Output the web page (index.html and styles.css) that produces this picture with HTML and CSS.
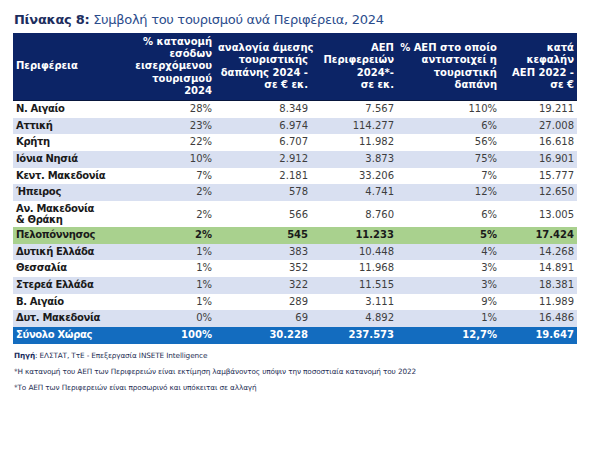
FILE: index.html
```html
<!DOCTYPE html>
<html lang="el">
<head>
<meta charset="utf-8">
<link rel="stylesheet" href="styles.css">
</head>
<body>
<div class="page">
  <h1 class="title"><b>Πίνακας 8:</b> Συμβολή του τουρισμού ανά Περιφέρεια, 2024</h1>
  <table class="tbl">
    <colgroup>
      <col class="c1"><col class="c2"><col class="c3"><col class="c4"><col class="c5"><col class="c6">
    </colgroup>
    <thead>
      <tr>
        <th class="lft">Περιφέρεια</th>
        <th>% κατανομή<br>εσόδων<br>εισερχόμενου<br>τουρισμού<br>2024</th>
        <th>αναλογία άμεσης<br>τουριστικής<br>δαπάνης 2024 -<br>σε € εκ.</th>
        <th>ΑΕΠ<br>Περιφερειών<br>2024*-<br>σε εκ.</th>
        <th>% ΑΕΠ στο οποίο<br>αντιστοιχεί η<br>τουριστική<br>δαπάνη</th>
        <th>κατά<br>κεφαλήν<br>ΑΕΠ 2022 -<br>σε €</th>
      </tr>
    </thead>
    <tbody>
      <tr><td>Ν. Αιγαίο</td><td>28%</td><td>8.349</td><td>7.567</td><td>110%</td><td>19.211</td></tr>
      <tr class="alt"><td>Αττική</td><td>23%</td><td>6.974</td><td>114.277</td><td>6%</td><td>27.008</td></tr>
      <tr><td>Κρήτη</td><td>22%</td><td>6.707</td><td>11.982</td><td>56%</td><td>16.618</td></tr>
      <tr class="alt"><td>Ιόνια Νησιά</td><td>10%</td><td>2.912</td><td>3.873</td><td>75%</td><td>16.901</td></tr>
      <tr><td>Κεντ. Μακεδονία</td><td>7%</td><td>2.181</td><td>33.206</td><td>7%</td><td>15.777</td></tr>
      <tr class="alt"><td>Ήπειρος</td><td>2%</td><td>578</td><td>4.741</td><td>12%</td><td>12.650</td></tr>
      <tr class="dbl"><td>Αν. Μακεδονία<br>&amp; Θράκη</td><td>2%</td><td>566</td><td>8.760</td><td>6%</td><td>13.005</td></tr>
      <tr class="hl"><td>Πελοπόννησος</td><td>2%</td><td>545</td><td>11.233</td><td>5%</td><td>17.424</td></tr>
      <tr class="alt"><td>Δυτική Ελλάδα</td><td>1%</td><td>383</td><td>10.448</td><td>4%</td><td>14.268</td></tr>
      <tr><td>Θεσσαλία</td><td>1%</td><td>352</td><td>11.968</td><td>3%</td><td>14.891</td></tr>
      <tr class="alt"><td>Στερεά Ελλάδα</td><td>1%</td><td>322</td><td>11.515</td><td>3%</td><td>18.381</td></tr>
      <tr><td>Β. Αιγαίο</td><td>1%</td><td>289</td><td>3.111</td><td>9%</td><td>11.989</td></tr>
      <tr class="alt"><td>Δυτ. Μακεδονία</td><td>0%</td><td>69</td><td>4.892</td><td>1%</td><td>16.486</td></tr>
      <tr class="total"><td>Σύνολο Χώρας</td><td>100%</td><td>30.228</td><td>237.573</td><td>12,7%</td><td>19.647</td></tr>
    </tbody>
  </table>
  <div class="notes">
    <p><b>Πηγή</b>: ΕΛΣΤΑΤ, ΤτΕ - Επεξεργασία INSETE Intelligence</p>
    <p>*Η κατανομή του ΑΕΠ των Περιφερειών είναι εκτίμηση λαμβάνοντος υπόψιν την ποσοστιαία κατανομή του 2022</p>
    <p>*Το ΑΕΠ των Περιφερειών είναι προσωρινό και υπόκειται σε αλλαγή</p>
  </div>
</div>
</body>
</html>
```

FILE: styles.css
```css
html, body {
  margin: 0;
  padding: 0;
  background: #ffffff;
}
.page {
  width: 600px;
  height: 453px;
  padding: 10px 0 0 13px;
  box-sizing: border-box;
  font-family: "DejaVu Sans", Verdana, sans-serif;
}
.title {
  margin: 0 0 4px 1px;
  font-size: 13px;
  letter-spacing: -0.3px;
  font-weight: normal;
  line-height: 19px;
  color: #2b4c8c;
  white-space: nowrap;
}
.title b {
  color: #1c2d5e;
  font-weight: bold;
}
.tbl {
  width: 564px;
  border-collapse: collapse;
  table-layout: fixed;
  font-size: 10px;
}
.c1 { width: 105px; }
.c2 { width: 97px; }
.c3 { width: 96px; }
.c4 { width: 86px; }
.c5 { width: 103px; }
.c6 { width: 77px; }
.tbl th {
  background: #0c2466;
  color: #ffffff;
  font-weight: bold;
  text-align: right;
  vertical-align: middle;
  line-height: 12.4px;
  padding: 2.5px 3px 2.5px 3px;
  white-space: nowrap;
}
.tbl th.lft {
  text-align: left;
}
.tbl thead tr {
  border-bottom: 1px solid #08163d;
}
.tbl td {
  padding: 2px 3px;
  line-height: 12.67px;
  text-align: right;
  color: #3d3d3d;
  white-space: nowrap;
}
.tbl tr.dbl td {
  line-height: 11px;
}
.tbl td:first-child {
  text-align: left;
  font-weight: bold;
  color: #1a1a1a;
  letter-spacing: -0.35px;
}
.tbl tr.alt td {
  background: #d9e0f1;
}
.tbl tr.hl td {
  background: #a9d18e;
  font-weight: bold;
  color: #1a1a1a;
}
.tbl tr.total td {
  background: #136cbf;
  font-weight: bold;
  color: #ffffff;
}
.notes {
  margin-top: 4px;
  font-size: 7.3px;
  letter-spacing: -0.12px;
  color: #1f2f55;
}
.notes p {
  margin: 0 0 0 1px;
  line-height: 16px;
  white-space: nowrap;
}
.notes b {
  color: #1c2d5e;
}
```
